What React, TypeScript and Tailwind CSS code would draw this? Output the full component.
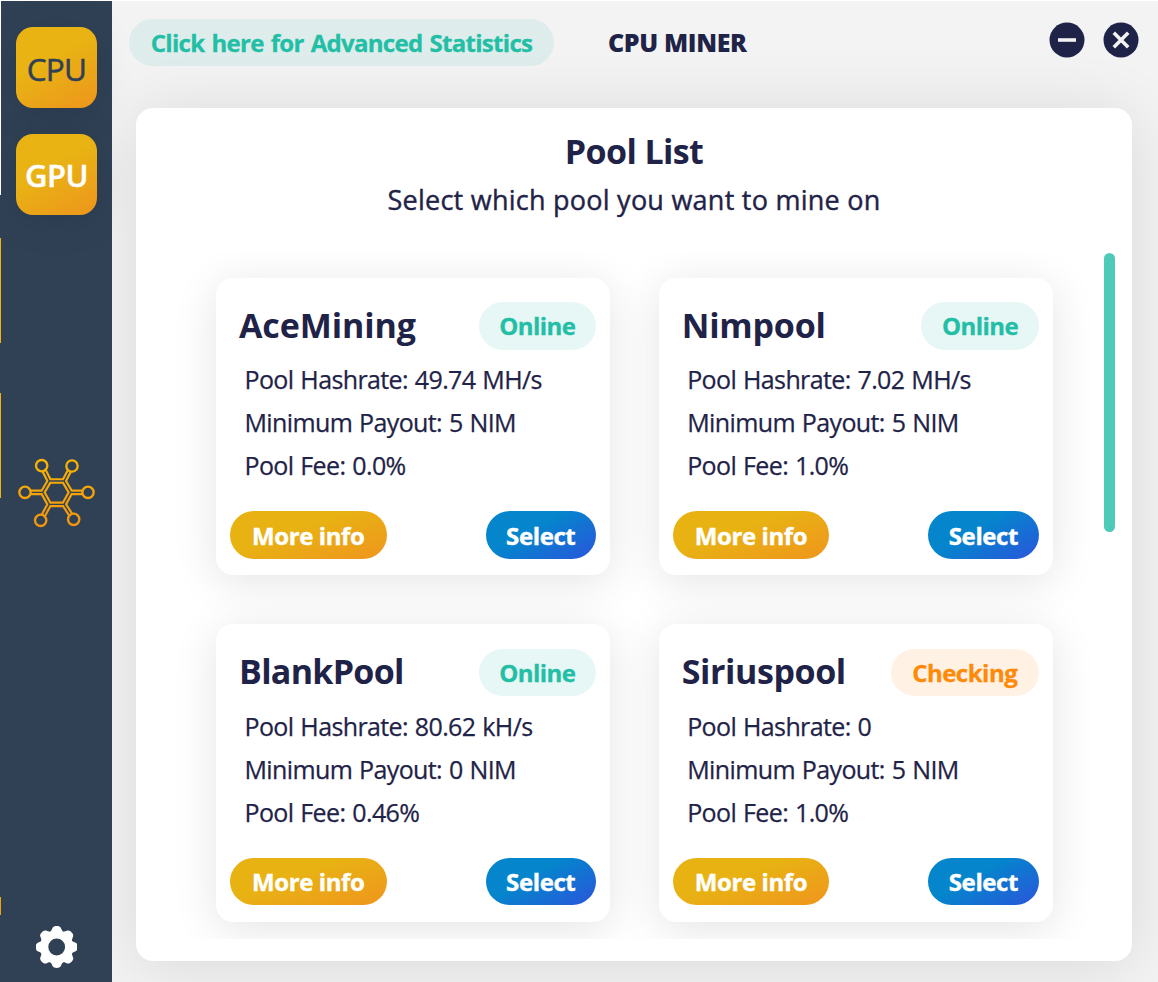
import React from 'react'

type Pool = {
  name: string
  status: 'Online' | 'Checking'
  hashrate: string
  payout: string
  fee: string
  nameTracking: string
}

const pools: Pool[] = [
  { name: 'AceMining', status: 'Online', hashrate: '49.74 MH/s', payout: '5 NIM', fee: '0.0%', nameTracking: 'tracking-[-0.1px]' },
  { name: 'Nimpool', status: 'Online', hashrate: '7.02 MH/s', payout: '5 NIM', fee: '1.0%', nameTracking: 'tracking-[-0.2px]' },
  { name: 'BlankPool', status: 'Online', hashrate: '80.62 kH/s', payout: '0 NIM', fee: '0.46%', nameTracking: 'tracking-[-0.7px]' },
  { name: 'Siriuspool', status: 'Checking', hashrate: '0', payout: '5 NIM', fee: '1.0%', nameTracking: 'tracking-[-0.4px]' },
]

const NetworkIcon = () => (
  <svg width="82" height="74" viewBox="48 48 246 222" fill="none">
    <defs>
      <linearGradient id="amber" gradientUnits="userSpaceOnUse" x1="0" y1="55" x2="0" y2="262">
        <stop offset="0" stopColor="#f7b500" />
        <stop offset="1" stopColor="#f3940f" />
      </linearGradient>
    </defs>
    <g stroke="url(#amber)" strokeWidth="17">
      <path d="M128 157 148 123H192L212 157 192 193H148Z" />
      <path d="M125 77 148 123M216 78 192 123M75 156.9 128 157M264 156.9 212 157M122 241 148 193M221 238 192 193" />
    </g>
    <g stroke="#304156" strokeWidth="4">
      <path d="M128 157 148 123H192L212 157 192 193H148Z" />
      <path d="M125 77 148 123M216 78 192 123M75 157H128M264 157H212M122 241 148 193M221 238 192 193" />
    </g>
    <g fill="#304156" stroke="url(#amber)" strokeWidth="7">
      <circle cx="125" cy="77" r="17" />
      <circle cx="216" cy="78" r="17" />
      <circle cx="75" cy="157" r="17" />
      <circle cx="264" cy="157" r="17" />
      <circle cx="122" cy="241" r="17" />
      <circle cx="221" cy="238" r="17" />
    </g>
  </svg>
)

const GearIcon = () => (
  <svg width="41" height="42" viewBox="-20.7 -21 41 42">
    <circle r="12.3" fill="none" stroke="#fff" strokeWidth="7.8" />
    <g fill="#fff">
      {[0, 45, 90, 135, 180, 225, 270, 315].map((angle) => (
        <path
          key={angle}
          transform={`rotate(${angle})`}
          d="M-6.8 -15C-5.4 -15.8 -5 -17.2 -4.2 -19C-3 -21.6 3 -21.6 4.2 -19C5 -17.2 5.4 -15.8 6.8 -15L5 -10H-5Z"
        />
      ))}
    </g>
  </svg>
)

const PoolCard = ({ pool }: { pool: Pool }) => (
  <div className="flex flex-col w-[394px] h-[297.2px] rounded-[17px] bg-white shadow-[0_7px_45px_rgba(0,0,0,0.11)] pt-[24.3px] pb-[16.2px] px-3.5">
    <div className="flex items-center justify-between pl-[9px]">
      <h2 className={`-mt-[3.2px] text-[34px] leading-[44px] font-bold whitespace-nowrap ${pool.nameTracking}`}>{pool.name}</h2>
      {pool.status === 'Online' ? (
        <span className="w-[117.3px] h-[47.6px] rounded-full bg-[#e7f7f5] text-[#23bea6] text-[24px] leading-[48px] tracking-[-0.55px] [-webkit-text-stroke:0.3px] font-bold text-center">Online</span>
      ) : (
        <span className="w-[148px] h-[47.6px] rounded-full bg-[#fff2e5] text-[#ff8a08] text-[24px] leading-[48px] tracking-[-0.5px] [-webkit-text-stroke:0.3px] font-bold text-center">Checking</span>
      )}
    </div>
    <div className="mt-[8.5px] pl-[14.5px] text-[25px] leading-[43px] tracking-[-0.62px] [word-spacing:1px] [-webkit-text-stroke:0.25px] whitespace-nowrap">
      <p>Pool Hashrate: {pool.hashrate}</p>
      <p>Minimum Payout: {pool.payout}</p>
      <p>Pool Fee: {pool.fee}</p>
    </div>
    <div className="mt-auto flex justify-between text-white text-[24px] leading-[34px] tracking-[-0.4px] [-webkit-text-stroke:0.4px] font-bold">
      <button className="w-[156.5px] h-[47.6px] pt-px rounded-full bg-[linear-gradient(160deg,#e8b213_40%,#ef951d)]">More info</button>
      <button className="w-[110.5px] h-[47.6px] pt-px rounded-full bg-[linear-gradient(150deg,#0485cc_40%,#2b55dc)]">Select</button>
    </div>
  </div>
)

const App = () => {
  return (
    <div className="flex w-[1158px] h-[982px] overflow-hidden font-['Open_Sans',sans-serif] text-[#1f2347] bg-white">
      {/* edge of the window behind */}
      <div className="flex flex-col w-px shrink-0 bg-[#304156]">
        <div className="h-[195px] bg-white" />
        <div className="mt-[43px] h-[105px] bg-[#f5b30a]" />
        <div className="mt-[50px] h-[105px] bg-[#f5b30a]" />
        <div className="mt-[399px] h-[18px] bg-[#f5a20a]" />
      </div>
      <aside className="z-10 mt-px w-[111px] shrink-0 flex flex-col items-center bg-[#304156]">
        <button className="mt-[26px] size-[81px] rounded-[17px] bg-[linear-gradient(150deg,#e8b313_40%,#ee951d)] shadow-[0_5px_40px_rgba(0,0,0,0.1)] text-[31.5px] tracking-[-0.7px] text-[#304156] [-webkit-text-stroke:0.5px] pt-0.5">CPU</button>
        <button className="mt-[26px] size-[81px] rounded-[17px] bg-[linear-gradient(150deg,#e8b313_40%,#ee951d)] shadow-[0_5px_40px_rgba(0,0,0,0.1)] text-[31px] tracking-[-0.5px] font-semibold text-white [-webkit-text-stroke:0.4px] pt-px">GPU</button>
        <div className="mt-[241px]">
          <NetworkIcon />
        </div>
        <div className="mt-auto mb-[14px]">
          <GearIcon />
        </div>
      </aside>
      <main className="mt-px flex-1 flex flex-col bg-[#f3f3f3]">
        <header className="flex items-start pt-[18px] pl-[17px] pr-[19px] h-[107px]">
          <button className="w-[425px] h-[47px] rounded-full bg-[#deedeb] text-[#23bea6] text-[24px] tracking-[-0.7px] [word-spacing:1.5px] [-webkit-text-stroke:0.3px] font-bold whitespace-nowrap">Click here for Advanced Statistics</button>
          <h1 className="ml-[54px] text-[25px] leading-[46px] tracking-[-0.35px] font-extrabold whitespace-nowrap">CPU MINER</h1>
          <div className="ml-auto mt-[3px] flex gap-[18px]">
            <button className="size-9">
              <svg width="36" height="36" viewBox="0 0 36 36" stroke="#f3f3f3" strokeWidth="3.6">
                <circle cx="18" cy="18" r="17.5" fill="#1f2347" stroke="none" />
                <path d="M9 18H27" />
              </svg>
            </button>
            <button className="size-9">
              <svg width="36" height="36" viewBox="0 0 36 36" stroke="#f3f3f3" strokeWidth="3.6">
                <circle cx="18" cy="18" r="17.5" fill="#1f2347" stroke="none" />
                <path d="M10.8 10.8 25.2 25.2M25.2 10.8 10.8 25.2" />
              </svg>
            </button>
          </div>
        </header>
        <section className="ml-6 w-[996px] h-[853px] rounded-[17px] bg-white shadow-[0_5px_65px_rgba(0,0,0,0.11)]">
          <div className="h-[145px] pt-[19px] text-center">
            <h1 className="text-[34px] leading-[48px] tracking-[-0.6px] font-bold">Pool List</h1>
            <p className="pt-px text-[27px] leading-[48px] tracking-[0.25px] [-webkit-text-stroke:0.4px]">Select which pool you want to mine on</p>
          </div>
          <div className="flex h-[686px] overflow-hidden">
            <div className="w-[968px] shrink-0 grid grid-cols-[394px_394px] content-start gap-x-[48.7px] gap-y-[49.2px] pt-[25px] pl-20">
              {pools.map((pool) => (
                <PoolCard key={pool.name} pool={pool} />
              ))}
            </div>
            <div className="w-[11px] h-[279px] rounded-full bg-[#4ecbb8]" />
          </div>
        </section>
      </main>
    </div>
  )
}

export default App
